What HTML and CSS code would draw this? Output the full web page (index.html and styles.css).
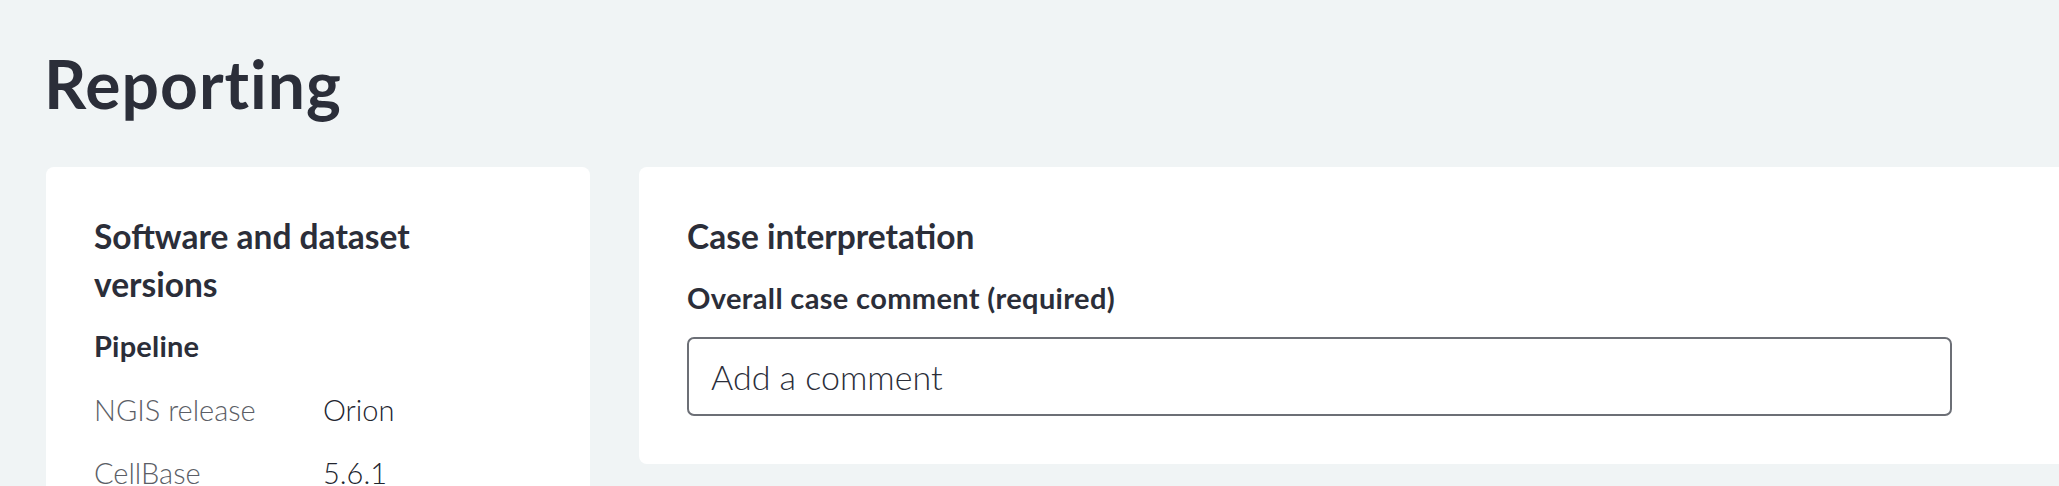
FILE: index.html
```html
<!DOCTYPE html>
<html lang="en">
<head>
<meta charset="utf-8">
<title>Reporting</title>
<link rel="stylesheet" href="styles.css">
</head>
<body>
<main class="page">
  <h1 class="page-title">Reporting</h1>
  <div class="layout">
    <section class="card card-versions">
      <h2 class="card-title card-title-narrow">Software and dataset versions</h2>
      <h3 class="sub-title">Pipeline</h3>
      <dl class="kv">
        <div class="kv-row"><dt>NGIS release</dt><dd>Orion</dd></div>
        <div class="kv-row"><dt>CellBase</dt><dd>5.6.1</dd></div>
      </dl>
    </section>
    <section class="card card-interpretation">
      <h2 class="card-title">Case interpretation</h2>
      <label class="field-label" for="comment">Overall case comment (required)</label>
      <input class="field-input" id="comment" type="text" placeholder="Add a comment">
    </section>
  </div>
</main>
</body>
</html>
```

FILE: styles.css
```css
* { box-sizing: border-box; }
html, body {
  margin: 0;
  padding: 0;
  background: #f0f4f5;
  overflow: hidden;
}
body {
  font-family: Lato, "Open Sans", "Liberation Sans", sans-serif;
  color: #2b2e39;
}
.page {
  padding: 44px 0 0 46px;
}
.page-title {
  margin: 0 0 0 -2px;
  font-size: 66px;
  line-height: 80px;
  font-weight: 700;
  letter-spacing: 1px;
  color: #2b2e39;
}
.layout {
  margin-top: 43px;
  display: flex;
  align-items: flex-start;
  gap: 49px;
  width: 2100px;
}
.card {
  background: #ffffff;
  border-radius: 8px;
  padding: 45px 48px 48px;
}
.card-versions {
  flex: 0 0 544px;
  height: 420px;
}
.card-interpretation {
  flex: 1 1 auto;
}
.card-title {
  margin: 0;
  font-size: 33.5px;
  line-height: 48px;
  font-weight: 700;
}
.card-title-narrow {
  max-width: 400px;
}
.sub-title {
  margin: 18px 0 0;
  font-size: 29px;
  line-height: 40px;
  font-weight: 700;
  letter-spacing: 0.2px;
}
.kv {
  margin: 24px 0 0;
}
.kv-row {
  display: flex;
  margin-bottom: 23px;
  font-size: 29px;
  line-height: 40px;
}
.kv-row dt {
  width: 229px;
  font-weight: 300;
  color: #5b5e66;
}
.kv-row dd {
  margin: 0;
  font-weight: 300;
  color: #22252f;
}
.field-label {
  display: block;
  margin-top: 18px;
  font-size: 29px;
  line-height: 40px;
  font-weight: 700;
  letter-spacing: 0.35px;
}
.field-input {
  display: block;
  margin-top: 19px;
  width: 1265px;
  height: 79px;
  padding: 0 22px;
  border: 2px solid #6c6f76;
  border-radius: 7px;
  background: #ffffff;
  font-family: inherit;
  font-size: 34px;
  font-weight: 300;
  color: #2b2e39;
  outline: none;
}
.field-input::placeholder {
  color: #2b2e39;
  opacity: 1;
}
```
